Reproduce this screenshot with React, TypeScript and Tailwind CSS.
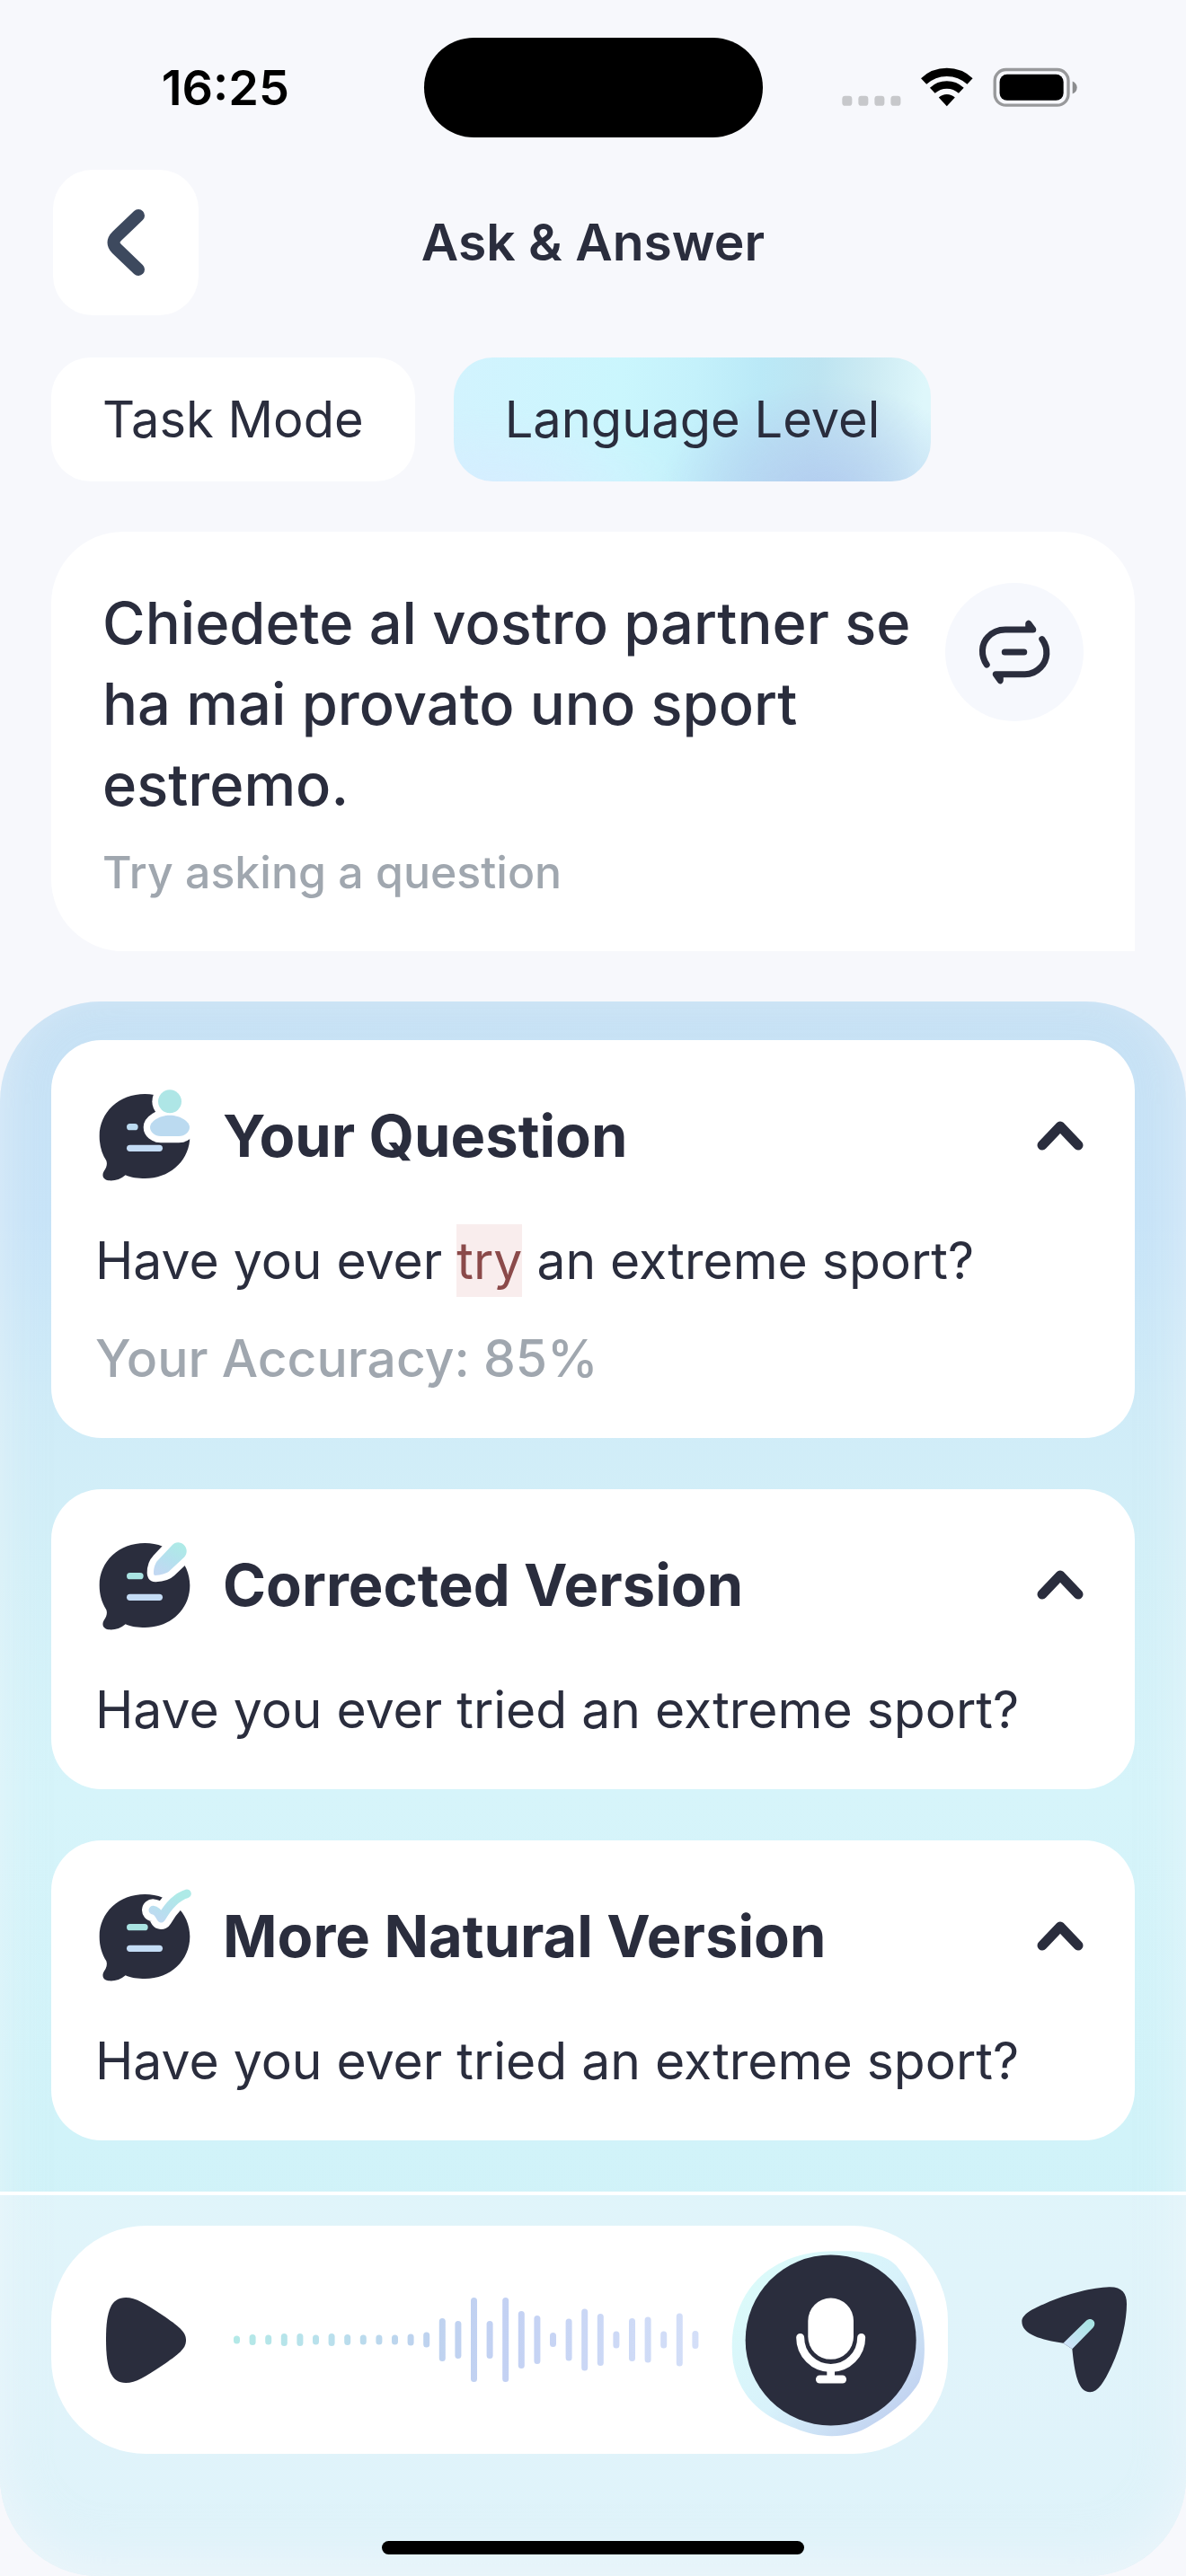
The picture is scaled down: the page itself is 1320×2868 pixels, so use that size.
import React, { useState } from "react";

const BUBBLE =
  "M217 54 C302 54 367 116 367 195 C367 275 302 336 217 336 C195 336 170 334 152 325 C135 340 115 345 95 343 C77 341 72 325 80 312 C89 300 92 288 88 277 C74 255 65 228 65 195 C65 115 130 54 217 54Z";
const PERSON_BODY =
  "M300 125 C335 125 366 146 366 165 C366 181 350 195 330 195 H270 C250 195 234 181 234 165 C234 146 265 125 300 125Z";
const PENCIL =
  "M246 154 C246 140 250 122 260 112 L308 61 C318 49 336 49 347 60 C359 72 359 90 348 101 L298 148 C290 156 268 161 252 162 C247 162 246 159 246 154Z";
const CHECK = "M244 107 C256 108 264 120 271 134 C291 99 318 64 357 52";

type Kind = "person" | "pencil" | "check";

function ChatIcon({ kind }: { kind: Kind }) {
  const id = "chat-" + kind;
  const first = kind === "person" ? 38 : kind === "pencil" ? 56 : 71;
  return (
    <svg viewBox="51 30 330 330" className="size-[110px] shrink-0" aria-hidden="true">
      <defs>
        <linearGradient id={id} gradientUnits="userSpaceOnUse" x1="330" y1="60" x2="270" y2="160">
          <stop offset="0" stopColor="#aeeae7" />
          <stop offset="0.5" stopColor="#b5e0ee" />
          <stop offset="1" stopColor="#c2d8f2" />
        </linearGradient>
      </defs>
      <path d={BUBBLE} fill="#2a2d3d" />
      {kind === "person" && (
        <g>
          <circle cx="300" cy="79" r="59" fill="#fff" />
          <path d={PERSON_BODY} fill="#fff" stroke="#fff" strokeWidth="44" strokeLinejoin="round" />
          <circle cx="300" cy="79" r="39" fill="#aee6e6" />
          <path d={PERSON_BODY} fill="#bbdaf0" />
        </g>
      )}
      {kind === "pencil" && (
        <g>
          <path d={PENCIL} fill="#fff" stroke="#fff" strokeWidth="44" strokeLinejoin="round" />
          <path d={PENCIL} fill={"url(#" + id + ")"} />
        </g>
      )}
      {kind === "check" && (
        <g fill="none" strokeLinecap="round" strokeLinejoin="round">
          <path d={CHECK} stroke="#fff" strokeWidth="74" />
          <path d={CHECK} stroke={"url(#" + id + ")"} strokeWidth="29" />
        </g>
      )}
      <rect x="156" y="153" width={first} height="22" rx="11" fill={kind === "person" ? "#bbdaf0" : "#a9e3e2"} />
      <rect x="156" y="224" width="120" height="22" rx="11" fill="#c4dcf5" />
    </svg>
  );
}

function Card({ kind, title, children }: { kind: Kind; title: string; children: React.ReactNode }) {
  const [open, setOpen] = useState(true);
  return (
    <section className="rounded-[56px] bg-white pt-[52px] pr-[53px] pb-12 pl-[49px]">
      <button
        type="button"
        aria-expanded={open}
        onClick={() => setOpen(!open)}
        className="flex w-full items-center gap-8 text-left"
      >
        <ChatIcon kind={kind} />
        <h2 className="flex-1 text-[65px] leading-[80px] font-bold">{title}</h2>
        <svg
          viewBox="0 0 60 40"
          className={open ? "h-10 w-15" : "h-10 w-15 rotate-180"}
          fill="none"
          stroke="#2a2d3d"
          strokeWidth="11"
          strokeLinecap="round"
          strokeLinejoin="round"
          aria-hidden="true"
        >
          <path d="M10 30 L30 9 L50 30" />
        </svg>
      </button>
      {open && <div className="mt-[43px] flex flex-col gap-7 text-[57px] leading-[81px]">{children}</div>}
    </section>
  );
}

const BARS = [
  9, 12, 11, 14, 14, 11, 14, 12, 11, 11, 11, 13, 17, 48, 42, 94, 42, 94, 64, 54, 16, 47, 69, 58, 19, 48, 51, 19, 59, 20,
];

function Waveform() {
  return (
    <svg viewBox="0 0 518 96" className="h-24 w-[518px]" role="img" aria-label="Recorded audio">
      <defs>
        <linearGradient id="wave" gradientUnits="userSpaceOnUse" x1="0" y1="0" x2="518" y2="0">
          <stop offset="0" stopColor="#b3e9e7" />
          <stop offset="0.2" stopColor="#b9e0ec" />
          <stop offset="0.38" stopColor="#bdd3ee" />
          <stop offset="0.58" stopColor="#c3d1f3" />
          <stop offset="1" stopColor="#d4dff8" />
        </linearGradient>
      </defs>
      <g fill="url(#wave)">
        {BARS.map((h, i) => (
          <rect key={i} x={i * 17.6} y={48 - h / 2} width="7" height={h} rx="3.5" />
        ))}
      </g>
    </svg>
  );
}

export default function App() {
  const [tab, setTab] = useState("level");
  return (
    <div className="flex min-h-screen flex-col bg-[#f7f8fc] font-[Inter,sans-serif] text-[#2a2d3d]">
      <div className="grid h-[153px] grid-cols-[1fr_377px_1fr] items-center pt-[42px] text-black">
        <div className="pl-[30px] text-center text-[54px] leading-none font-semibold">16:25</div>
        <div className="h-[111px] rounded-full bg-black" />
        <div className="flex justify-end pr-[121px]">
          <svg viewBox="110 70 785 140" className="h-[47px] w-[262px]" aria-hidden="true">
            <g fill="#c7c8cb">
              <rect x="111" y="168" width="33" height="33" rx="10" />
              <rect x="165" y="168" width="33" height="33" rx="10" />
              <rect x="219" y="168" width="33" height="33" rx="10" />
              <rect x="273" y="168" width="33" height="33" rx="10" />
            </g>
            <g fill="none" stroke="#000">
              <path d="M383 119 A113 113 0 0 1 537 119" strokeWidth="27" />
              <path d="M412 150 A70 70 0 0 1 508 150" strokeWidth="25" />
            </g>
            <path d="M433 173 A39 39 0 0 1 487 173 L460 202Z" />
            <rect x="620" y="80" width="245" height="119" rx="37" fill="none" stroke="#98999b" strokeWidth="10" />
            <rect x="636" y="96" width="213" height="87" rx="25" />
            <path d="M879 119 C889 123 894 131 894 140 C894 149 889 157 879 161Z" fill="#8b8c8e" />
          </svg>
        </div>
      </div>

      <header className="mt-9 grid grid-cols-[162px_1fr_162px] items-center px-[59px]">
        <button
          type="button"
          aria-label="Back"
          className="flex size-[162px] items-center justify-center rounded-[44px] bg-white"
        >
          <svg
            viewBox="0 0 44 76"
            className="h-[76px] w-11"
            fill="none"
            stroke="#3d495e"
            strokeWidth="14"
            strokeLinecap="round"
            strokeLinejoin="round"
            aria-hidden="true"
          >
            <path d="M36 8 L12 31 Q5 38 12 45 L36 68" />
          </svg>
        </button>
        <h1 className="text-center text-[57px] leading-[72px] font-semibold">Ask &amp; Answer</h1>
      </header>

      <div role="tablist" className="mt-[47px] flex gap-[43px] px-[57px] text-[56px]">
        <button
          type="button"
          role="tab"
          aria-selected={tab === "task"}
          onClick={() => setTab("task")}
          className="rounded-[44px] bg-white px-[57px] py-7 leading-[82px]"
        >
          Task Mode
        </button>
        <button
          type="button"
          role="tab"
          aria-selected={tab === "level"}
          onClick={() => setTab("level")}
          className="rounded-[44px] bg-[radial-gradient(ellipse_34%_90%_at_77%_110%,#b3cdf0_0%,#b5d0f099_50%,#b9d6f000_100%),radial-gradient(ellipse_40%_70%_at_8%_110%,#d6edff_0%,#d6edff00_100%),linear-gradient(95deg,#d2f3fe_0%,#caf6fd_35%,#c4f1fb_50%,#bae9f7_63%,#bde4f1_75%,#cdebf3_86%,#def7fb_97%)] px-[57px] py-7 leading-[82px]"
        >
          Language Level
        </button>
      </div>

      <section className="mx-[57px] mt-[56px] flex items-start justify-between rounded-[80px] rounded-br-none bg-white px-[57px] pt-[57px] pb-[50px]">
        <div className="flex-1">
          <p className="text-[65px] leading-[90px] font-medium">
            Chiedete al vostro partner se ha mai provato uno sport estremo.
          </p>
          <p className="mt-3.5 text-[50px] leading-[76px] font-medium text-[#a0a7af]">Try asking a question</p>
        </div>
        <button
          type="button"
          aria-label="New question"
          className="size-[154px] shrink-0 rounded-full bg-[#f6f8fd]"
        >
          <svg
            viewBox="10 27 460 460"
            className="size-full"
            fill="none"
            stroke="#2a2d3d"
            strokeWidth="21"
            strokeLinecap="round"
            strokeLinejoin="round"
            aria-hidden="true"
          >
            <path d="M148 299 C128 270 129 230 152 207 C167 190 187 182 210 182 H302 L287 162 V180" />
            <path d="M332 214 C355 245 350 285 328 307 C313 323 297 331 275 331 H178 L193 352 V334" />
            <path d="M208 257 H272" />
          </svg>
        </button>
      </section>

      <main className="mt-[56px] flex flex-1 flex-col overflow-hidden rounded-t-[112px] rounded-b-[110px] bg-[linear-gradient(to_bottom,#c8e2f5_0%,#c8e4f8_14%,#d0ecf8_26%,#d3f0f8_36%,#d6f4fa_50%,#d1f3f9_72%,#cff0f8_100%)] shadow-[inset_0_-20px_50px_#f7f8fc80]">
        <div className="flex flex-col gap-[57px] px-[57px] pt-[43px] pb-[57px]">
          <Card kind="person" title="Your Question">
            <p>
              Have you ever <mark className="inline-block bg-[#f9eded] text-[#8b4a4a]">try</mark> an extreme sport?
            </p>
            <p className="font-medium text-[#a0a7af]">Your Accuracy: 85%</p>
          </Card>
          <Card kind="pencil" title="Corrected Version">
            <p>Have you ever tried an extreme sport?</p>
          </Card>
          <Card kind="check" title="More Natural Version">
            <p>Have you ever tried an extreme sport?</p>
          </Card>
        </div>

        <footer className="flex flex-1 flex-col justify-between border-t-4 border-white bg-[#f7f8fc66]">
          <div className="mt-[34px] flex items-center justify-between pr-[65px] pl-[57px]">
            <div className="flex h-[254px] items-center rounded-[106px] bg-white pr-[26px] pl-[61px]">
              <button type="button" aria-label="Play">
                <svg viewBox="0 0 89 95" className="h-[95px] w-[89px]" fill="#2a2d3d" aria-hidden="true">
                  <path d="M0 46 C0 14 6 0 22 0 C33 0 44 7 62 19 C81 32 89 38 89 47.5 C89 57 81 63 62 76 C44 88 33 95 22 95 C6 95 0 81 0 46Z" />
                </svg>
              </button>
              <div className="mr-9 ml-[53px]">
                <Waveform />
              </div>
              <button type="button" aria-label="Record" className="mt-2">
                <svg viewBox="105 107 645 620" className="h-[207px] w-[215px]" aria-hidden="true">
                  <defs>
                    <linearGradient id="blob" x1="0.1" y1="0.2" x2="0.85" y2="0.9">
                      <stop offset="0" stopColor="#dbfafa" />
                      <stop offset="0.5" stopColor="#d8f2fb" />
                      <stop offset="1" stopColor="#c1d2f0" />
                    </linearGradient>
                  </defs>
                  <path
                    fill="url(#blob)"
                    d="M430 108 C520 106 605 106 655 155 C700 205 722 270 740 340 C755 410 753 490 732 545 C700 600 640 650 570 690 C500 735 400 735 320 700 C225 665 135 610 111 480 C98 390 118 300 165 235 C225 150 330 110 430 108Z"
                  />
                  <circle cx="437" cy="405" r="285" fill="#2a2d3d" />
                  <rect x="361" y="264" width="152" height="205" rx="76" fill="#fff" />
                  <path
                    d="M335 396 A102 102 0 0 0 539 396"
                    fill="none"
                    stroke="#fff"
                    strokeWidth="27"
                    strokeLinecap="round"
                  />
                  <rect x="424" y="500" width="26" height="30" fill="#fff" />
                  <rect x="387" y="522" width="102" height="27" rx="13" fill="#fff" />
                </svg>
              </button>
            </div>
            <button type="button" aria-label="Send">
              <svg viewBox="1069 228 354 356" className="size-[118px]" aria-hidden="true">
                <defs>
                  <linearGradient id="send" gradientUnits="userSpaceOnUse" x1="1300" y1="345" x2="1222" y2="430">
                    <stop offset="0" stopColor="#a8e5e3" />
                    <stop offset="1" stopColor="#cfe3f9" />
                  </linearGradient>
                </defs>
                <path
                  fill="#2a2d3d"
                  d="M1208 417 C1135 407 1069 388 1069 345 C1069 320 1105 302 1150 283 C1220 252 1310 230 1362 229 C1405 228 1421 250 1421 285 C1421 340 1405 420 1370 495 C1345 548 1325 582 1298 582 C1258 582 1246 520 1238 437Z"
                />
                <path
                  fill="url(#send)"
                  d="M1208 417 L1285 342 C1293 334 1303 335 1309 341 C1315 348 1315 357 1308 365 L1238 437Z"
                />
              </svg>
            </button>
          </div>
          <div className="mx-auto mt-24 mb-6 h-[15px] w-[470px] rounded-full bg-black" />
        </footer>
      </main>
    </div>
  );
}
